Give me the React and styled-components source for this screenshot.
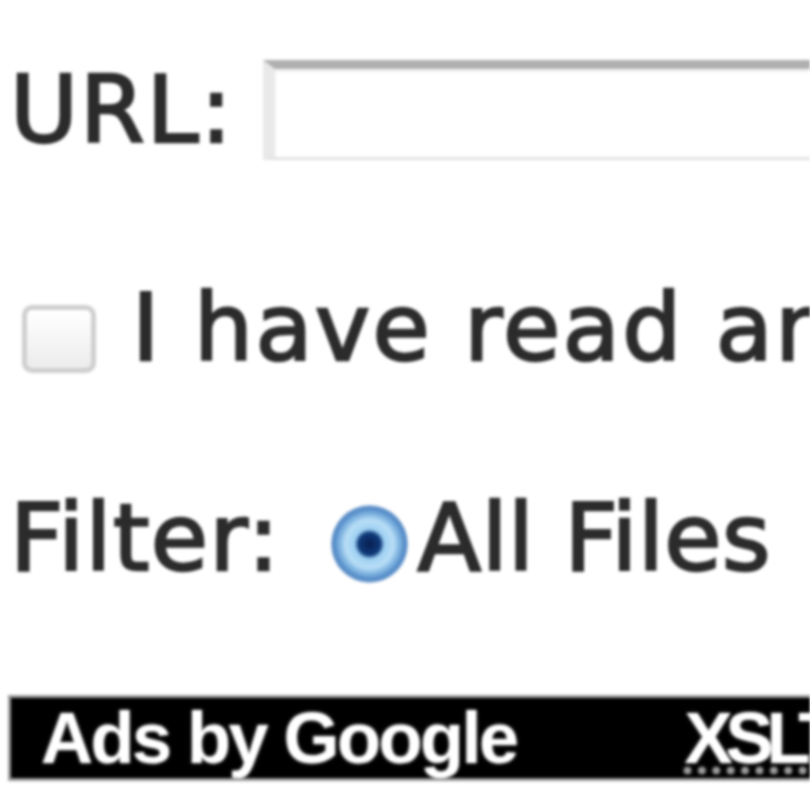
import styled, { createGlobalStyle } from "styled-components";

const GlobalStyle = createGlobalStyle`
  html, body {
    margin: 0;
    padding: 0;
    background: #ffffff;
  }
`;

const Page = styled.div`
  width: 810px;
  height: 810px;
  overflow: hidden;
  background: #ffffff;
  font-family: "DejaVu Sans", Verdana, sans-serif;
  color: #2b2b2b;
  filter: blur(1.4px);
  display: flex;
  flex-direction: column;
`;

const Row = styled.div`
  display: flex;
  align-items: flex-start;
  height: ${(p) => p.$height}px;
  margin-top: ${(p) => p.$top}px;
  padding-left: 10px;
  white-space: nowrap;
`;

const Label = styled.span`
  font-size: 93px;
  line-height: ${(p) => p.$lh}px;
  letter-spacing: ${(p) => p.$ls ?? 1.5}px;
  -webkit-text-stroke: 2.5px #2b2b2b;
`;

const TextInput = styled.div`
  flex: none;
  width: 600px;
  height: 100px;
  box-sizing: border-box;
  margin-left: 29px;
  background: #ffffff;
  border: 3px solid #e2e2e2;
  border-top: 9px solid #b0b0b0;
  border-left: 12px solid #e9e9e9;
  box-shadow: inset 0 3px 3px rgba(0, 0, 0, 0.06);
`;

const Checkbox = styled.div`
  flex: none;
  width: 74px;
  height: 68px;
  box-sizing: border-box;
  margin: 22px 36px 0 12px;
  border: 5px solid #cfcfcf;
  border-radius: 10px;
  background: linear-gradient(#ffffff, #ececec);
`;

const Radio = styled.div`
  flex: none;
  width: 77px;
  height: 78px;
  margin: 12px 10px 0 50px;
  border-radius: 50%;
  background: radial-gradient(
    circle at 50% 50%,
    #071f4f 0,
    #0f3a7a 11px,
    #9dd0f2 15px,
    #b9def6 24px,
    #7eb3e0 30px,
    #4f86c4 36px,
    #9ab9da 39px
  );
`;

const AdBar = styled.div`
  display: flex;
  align-items: center;
  height: 80px;
  margin: 112px 0 0 8px;
  padding-left: 30px;
  background: #000000;
  border: 3px solid #9a9a9a;
  border-right: none;
  overflow: hidden;
  white-space: nowrap;
  font-family: "Liberation Sans", Arial, sans-serif;
  font-weight: bold;
  font-size: 72px;
  color: #ffffff;
  text-shadow: 0 0 3px rgba(160, 160, 160, 0.8);
`;

const AdTitle = styled.span`
  letter-spacing: -2.5px;
`;

const AdLink = styled.span`
  margin-left: 168px;
  letter-spacing: -7px;
  text-decoration: underline dotted #9a9a9a;
`;

export default function App() {
  return (
    <>
      <GlobalStyle />
      <Page>
        <Row $top={60} $height={100}>
          <Label $lh={100} $ls={2}>URL:</Label>
          <TextInput />
        </Row>
        <Row $top={123} $height={90}>
          <Checkbox />
          <Label $lh={90} $ls={2.5}>
            I have read and agree
          </Label>
        </Row>
        <Row $top={120} $height={90}>
          <Label $lh={90}>Filter:</Label>
          <Radio />
          <Label $lh={90} $ls={0.5}>All Files</Label>
        </Row>
        <AdBar>
          <AdTitle>Ads by Google</AdTitle>
          <AdLink>XSLT</AdLink>
        </AdBar>
      </Page>
    </>
  );
}
